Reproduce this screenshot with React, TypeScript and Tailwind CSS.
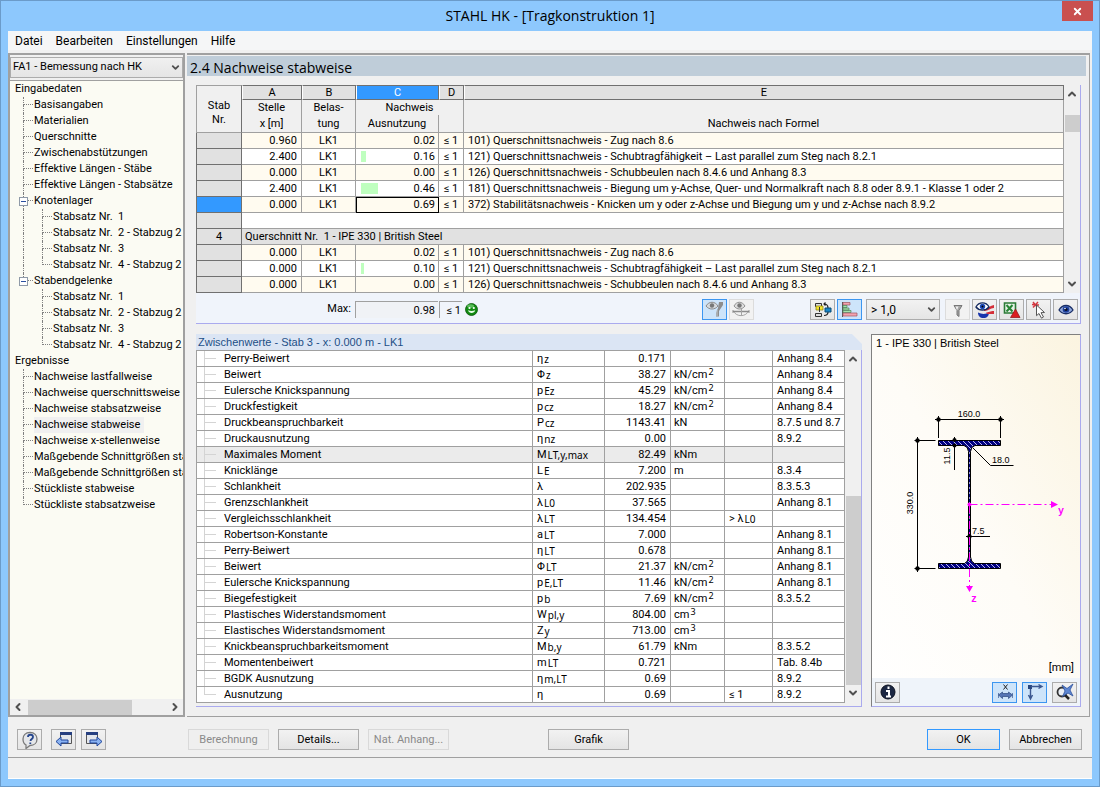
import type { ReactNode } from 'react'
import { ChevronDown, ChevronLeft, ChevronRight, ChevronUp, X } from 'lucide-react'
import clsx from 'clsx'

interface TreeItem {
  label: string
  children?: TreeItem[]
  active?: boolean
}

interface CheckRow {
  id?: string
  title?: string
  x?: string
  load?: string
  ratio?: string
  formula?: string
  bar?: number
  selected?: boolean
}

interface DetailRow {
  name: string
  sym: string
  sub?: string
  value: string
  unit?: string
  exp?: string
  cond?: ReactNode
  ref?: string
  active?: boolean
}

const STABSAETZE: TreeItem[] = [
  { label: 'Stabsatz Nr.  1' },
  { label: 'Stabsatz Nr.  2 - Stabzug 2' },
  { label: 'Stabsatz Nr.  3' },
  { label: 'Stabsatz Nr.  4 - Stabzug 2' },
]

const TREE: TreeItem[] = [
  {
    label: 'Eingabedaten',
    children: [
      { label: 'Basisangaben' },
      { label: 'Materialien' },
      { label: 'Querschnitte' },
      { label: 'Zwischenabstützungen' },
      { label: 'Effektive Längen - Stäbe' },
      { label: 'Effektive Längen - Stabsätze' },
      { label: 'Knotenlager', children: STABSAETZE },
      { label: 'Stabendgelenke', children: STABSAETZE },
    ],
  },
  {
    label: 'Ergebnisse',
    children: [
      { label: 'Nachweise lastfallweise' },
      { label: 'Nachweise querschnittsweise' },
      { label: 'Nachweise stabsatzweise' },
      { label: 'Nachweise stabweise', active: true },
      { label: 'Nachweise x-stellenweise' },
      { label: 'Maßgebende Schnittgrößen sta' },
      { label: 'Maßgebende Schnittgrößen sta' },
      { label: 'Stückliste stabweise' },
      { label: 'Stückliste stabsatzweise' },
    ],
  },
]

const CHECKS: CheckRow[] = [
  { x: '0.960', load: 'LK1', ratio: '0.02', formula: '101) Querschnittsnachweis - Zug nach 8.6' },
  { x: '2.400', load: 'LK1', ratio: '0.16', bar: 5, formula: '121) Querschnittsnachweis - Schubtragfähigkeit – Last parallel zum Steg nach 8.2.1' },
  { x: '0.000', load: 'LK1', ratio: '0.00', formula: '126) Querschnittsnachweis - Schubbeulen nach 8.4.6 und Anhang 8.3' },
  { x: '2.400', load: 'LK1', ratio: '0.46', bar: 17, formula: '181) Querschnittsnachweis - Biegung um y-Achse, Quer- und Normalkraft nach 8.8 oder 8.9.1 - Klasse 1 oder 2' },
  { x: '0.000', load: 'LK1', ratio: '0.69', selected: true, formula: '372) Stabilitätsnachweis - Knicken um y oder z-Achse und Biegung um y und z-Achse nach 8.9.2' },
  {},
  { id: '4', title: 'Querschnitt Nr.  1 - IPE 330 | British Steel' },
  { x: '0.000', load: 'LK1', ratio: '0.02', formula: '101) Querschnittsnachweis - Zug nach 8.6' },
  { x: '0.000', load: 'LK1', ratio: '0.10', bar: 3, formula: '121) Querschnittsnachweis - Schubtragfähigkeit – Last parallel zum Steg nach 8.2.1' },
  { x: '0.000', load: 'LK1', ratio: '0.00', formula: '126) Querschnittsnachweis - Schubbeulen nach 8.4.6 und Anhang 8.3' },
]

const DETAILS: DetailRow[] = [
  { name: 'Perry-Beiwert', sym: 'η', sub: 'z', value: '0.171', ref: 'Anhang 8.4' },
  { name: 'Beiwert', sym: 'Φ', sub: 'z', value: '38.27', unit: 'kN/cm', exp: '2', ref: 'Anhang 8.4' },
  { name: 'Eulersche Knickspannung', sym: 'p', sub: 'Ez', value: '45.29', unit: 'kN/cm', exp: '2', ref: 'Anhang 8.4' },
  { name: 'Druckfestigkeit', sym: 'p', sub: 'cz', value: '18.27', unit: 'kN/cm', exp: '2', ref: 'Anhang 8.4' },
  { name: 'Druckbeanspruchbarkeit', sym: 'P', sub: 'cz', value: '1143.41', unit: 'kN', ref: '8.7.5 und 8.7' },
  { name: 'Druckausnutzung', sym: 'η', sub: 'nz', value: '0.00', ref: '8.9.2' },
  { name: 'Maximales Moment', sym: 'M', sub: 'LT,y,max', value: '82.49', unit: 'kNm', active: true },
  { name: 'Knicklänge', sym: 'L', sub: 'E', value: '7.200', unit: 'm', ref: '8.3.4' },
  { name: 'Schlankheit', sym: 'λ', value: '202.935', ref: '8.3.5.3' },
  { name: 'Grenzschlankheit', sym: 'λ', sub: 'L0', value: '37.565', ref: 'Anhang 8.1' },
  { name: 'Vergleichsschlankheit', sym: 'λ', sub: 'LT', value: '134.454', cond: <>&gt; <Sym sym="λ" sub="L0" /></> },
  { name: 'Robertson-Konstante', sym: 'a', sub: 'LT', value: '7.000', ref: 'Anhang 8.1' },
  { name: 'Perry-Beiwert', sym: 'η', sub: 'LT', value: '0.678', ref: 'Anhang 8.1' },
  { name: 'Beiwert', sym: 'Φ', sub: 'LT', value: '21.37', unit: 'kN/cm', exp: '2', ref: 'Anhang 8.1' },
  { name: 'Eulersche Knickspannung', sym: 'p', sub: 'E,LT', value: '11.46', unit: 'kN/cm', exp: '2', ref: 'Anhang 8.1' },
  { name: 'Biegefestigkeit', sym: 'p', sub: 'b', value: '7.69', unit: 'kN/cm', exp: '2', ref: '8.3.5.2' },
  { name: 'Plastisches Widerstandsmoment', sym: 'W', sub: 'pl,y', value: '804.00', unit: 'cm', exp: '3' },
  { name: 'Elastisches Widerstandsmoment', sym: 'Z', sub: 'y', value: '713.00', unit: 'cm', exp: '3' },
  { name: 'Knickbeanspruchbarkeitsmoment', sym: 'M', sub: 'b,y', value: '61.79', unit: 'kNm', ref: '8.3.5.2' },
  { name: 'Momentenbeiwert', sym: 'm', sub: 'LT', value: '0.721', ref: 'Tab. 8.4b' },
  { name: 'BGDK Ausnutzung', sym: 'η', sub: 'm,LT', value: '0.69', ref: '8.9.2' },
  { name: 'Ausnutzung', sym: 'η', value: '0.69', cond: '≤ 1', ref: '8.9.2' },
]

function Sym({ sym, sub }: { sym: string; sub?: string }) {
  return (
    <>
      {sym}
      {sub && <sub className="bottom-[-1px] ml-px font-['Noto_Sans',sans-serif] text-[10px]">{sub}</sub>}
    </>
  )
}

function Icon({ children }: { children: ReactNode }) {
  return (
    <svg width="24" height="20" viewBox="0 0 24 20" fill="none" className="shrink-0" aria-hidden="true">
      {children}
    </svg>
  )
}

function IconButton({ label, active, disabled, children }: { label: string; active?: boolean; disabled?: boolean; children: ReactNode }) {
  return (
    <button
      type="button"
      aria-label={label}
      disabled={disabled}
      className={clsx(
        'flex h-[21px] w-[25px] shrink-0 items-center justify-center overflow-hidden border',
        active && 'border-[#3c96f0] bg-[#cde4fa]',
        disabled && 'border-[#dcdcdc] bg-[#f2f2f2]',
        !active && !disabled && 'border-[#acacac] bg-linear-to-b from-[#f2f2f2] to-[#e5e5e5]',
      )}
    >
      {children}
    </button>
  )
}

function TextButton({ children, disabled, primary, className }: { children: ReactNode; disabled?: boolean; primary?: boolean; className: string }) {
  return (
    <button
      type="button"
      disabled={disabled}
      className={clsx(
        'h-[21px] border pt-px text-[11px] leading-[18px]',
        disabled ? 'border-[#d9d9d9] bg-[#efefef] text-[#8a8a8a]' : 'bg-linear-to-b from-[#f2f2f2] to-[#e4e4e4]',
        !disabled && (primary ? 'border-[#3399ff]' : 'border-[#acacac]'),
        className,
      )}
    >
      {children}
    </button>
  )
}

function VScroll({ lead, thumb }: { lead: string; thumb: string }) {
  return (
    <div className="flex w-4 shrink-0 flex-col items-center bg-[#f0f0f0] text-[#505050]">
      <ChevronUp size={12} strokeWidth={4} className="mt-[3px]" />
      <div className={lead} />
      <div className={clsx('w-[15px] bg-[#cdcdcd]', thumb)} />
      <div className="grow" />
      <ChevronDown size={12} strokeWidth={4} className="mb-[3px]" />
    </div>
  )
}

// one connector cell in front of a tree label
function Guide({ branch, line }: { branch?: boolean; line?: boolean }) {
  return (
    <span className="h-4 w-[19px] shrink-0 pl-2">
      <span className={clsx('block h-2 w-[10px] border-dotted border-[#808080]', (branch || line) && 'border-l', branch && 'border-b')} />
      <span className={clsx('block h-2 border-dotted border-[#808080]', line && 'border-l')} />
    </span>
  )
}

function TreeNodes({ items, trail = [], level = 0 }: { items: TreeItem[]; trail?: boolean[]; level?: number }) {
  return (
    <ul>
      {items.map((item, i) => {
        const more = i < items.length - 1
        return (
          <li key={i}>
            <div className="relative flex h-4 whitespace-pre leading-4">
              {trail.map((line, k) => (
                <Guide key={k} line={line} />
              ))}
              {level > 0 && <Guide branch line={more} />}
              {level > 0 && item.children && (
                <button
                  type="button"
                  aria-label="Zuklappen"
                  className="absolute top-[4px] left-[4px] flex size-[9px] items-center justify-center border border-[#8f9aa8] bg-white"
                >
                  <span className="h-px w-[5px] bg-[#2b50a0]" />
                </button>
              )}
              <a href="#" className={item.active ? 'bg-[#f0f0f0] pr-1' : undefined}>{item.label}</a>
            </div>
            {item.children && (
              <TreeNodes items={item.children} level={level + 1} trail={level > 0 ? [...trail, more] : []} />
            )}
          </li>
        )
      })}
    </ul>
  )
}

function Sidebar() {
  return (
    <aside className="flex w-[177px] shrink-0 flex-col border-2 border-[#a0a0a0] bg-[#fbfbf3]">
      <div className="bg-[#f0f0f0] py-[2px]">
        <div className="relative">
          <select aria-label="Bemessungsfall" className="block h-[21px] w-full appearance-none border border-[#acacac] bg-linear-to-b from-[#f0f0f0] to-[#e5e5e5] pl-[2px] text-[11px]">
            <option>FA1 - Bemessung nach HK</option>
          </select>
          <ChevronDown size={11} strokeWidth={4} className="pointer-events-none absolute top-[5px] right-[2px] text-[#505050]" />
        </div>
      </div>
      <nav className="grow overflow-hidden border-t border-[#a0a0a0] pl-[5px] text-[11px]">
        <TreeNodes items={TREE} />
      </nav>
      <div className="flex h-4 items-center justify-between bg-[#f0f0f0] px-[2px] text-[#505050]">
        <ChevronLeft size={12} strokeWidth={4} />
        <div className="mr-[37px] ml-1 h-[15px] grow bg-[#cdcdcd]" />
        <ChevronRight size={12} strokeWidth={4} />
      </div>
    </aside>
  )
}

const cell = 'border-r border-b border-[#a0a0a0]'
const colHead = 'border border-t-[#707070] border-l-white border-r-[#707070] border-b-[#707070] bg-[#e1e1e1]'

function ChecksTable() {
  return (
    <table className="min-w-0 grow table-fixed border-separate border-spacing-0 text-[11px] leading-[15px] whitespace-pre">
      <colgroup>
        <col className="w-[46px]" />
        <col className="w-[60px]" />
        <col className="w-[54px]" />
        <col className="w-[83px]" />
        <col className="w-[25px]" />
        <col />
      </colgroup>
      <thead className="bg-[#f0f0f0]">
        <tr className="h-[15px] leading-[13px]">
          <th rowSpan={3} className="border border-[#a0a0a0] border-r-[#707070] pt-2 align-middle leading-[14px] font-normal">
            Stab<br />Nr.
          </th>
          <th className={clsx(colHead, 'font-normal')}>A</th>
          <th className={clsx(colHead, 'font-normal')}>B</th>
          <th className="border border-t-[#707070] border-r-[#707070] border-b-[#707070] border-l-white bg-[#3399ff] font-normal text-white">C</th>
          <th className={clsx(colHead, 'font-normal')}>D</th>
          <th className={clsx(colHead, 'font-normal')}>E</th>
        </tr>
        <tr className="h-[15px] align-top">
          <th className="border-r border-[#a0a0a0] font-normal">Stelle</th>
          <th className="border-r border-[#a0a0a0] font-normal">Belas-</th>
          <th colSpan={2} className="border-r border-[#a0a0a0] font-normal">Nachweis</th>
          <th className="border-r border-[#a0a0a0]" />
        </tr>
        <tr className="h-[18px] align-top">
          <th className={clsx(cell, 'pt-px font-normal')}>x [m]</th>
          <th className={clsx(cell, 'pt-px font-normal')}>tung</th>
          <th className={clsx(cell, 'pt-px font-normal')}>Ausnutzung</th>
          <th className={cell} />
          <th className={clsx(cell, 'pt-px font-normal')}>Nachweis nach Formel</th>
        </tr>
      </thead>
      <tbody>
        {CHECKS.map((row, i) => (
          <tr key={i} className={clsx('h-4', row.title ? 'bg-[#e1e1e1]' : row.formula && i % 2 === (i > 6 ? 1 : 0) ? 'bg-[#fffbf0]' : 'bg-white')}>
            <th
              className={clsx(
                'border-r border-b border-l border-r-[#707070] border-b-[#707070] border-l-[#707070] font-normal',
                row.selected ? 'bg-[#3399ff]' : 'bg-[#e1e1e1]',
              )}
            >
              {row.id}
            </th>
            {row.formula ? (
              <>
                <td className={clsx(cell, 'pr-1 text-right')}>{row.x}</td>
                <td className={clsx(cell, 'text-center')}>{row.load}</td>
                <td className={clsx(cell, row.selected && 'outline-1 -outline-offset-1 outline-black')}>
                  <div className="flex items-center justify-between pr-[3px] pl-[5px]">
                    <span className="h-[11px] bg-[#bfffbf]" style={{ width: row.bar ?? 0 }} />
                    {row.ratio}
                  </div>
                </td>
                <td className={clsx(cell, 'text-center')}>≤ 1</td>
                <td className={clsx(cell, 'overflow-hidden pl-1')}>{row.formula}</td>
              </>
            ) : (
              <td colSpan={5} className={clsx(cell, 'pl-[3px]')}>{row.title}</td>
            )}
          </tr>
        ))}
      </tbody>
    </table>
  )
}

function MaxBar() {
  return (
    <div className="flex h-[30px] items-center pt-[3px] pr-[2px]">
      <label htmlFor="max" className="w-[155px] text-right text-[11px]">Max:</label>
      <input
        id="max"
        readOnly
        value="0.98"
        className="ml-1 h-[17px] w-[83px] border-t border-l border-[#a0a0a0] bg-[#f0f2f6] pr-[3px] text-right text-[11px]"
      />
      <span className="ml-px h-[17px] w-[23px] border-t border-l border-[#a0a0a0] pr-px text-right text-[11px] leading-[17px]">≤ 1</span>
      <svg width="13" height="13" viewBox="0 0 13 13" className="ml-[3px]" aria-hidden="true">
        <circle cx="6.500" cy="6.500" r="6" fill="#128a12" stroke="#075507" strokeWidth=".8" />
        <ellipse cx="5.500" cy="3" rx="3.500" ry="1.800" fill="#8be08b" opacity=".6" />
        <circle cx="4.500" cy="5" r="1.100" fill="#fff" />
        <circle cx="8.800" cy="5" r="1.100" fill="#fff" />
        <path d="M3 7.300q3.500 1.500 7.200 0c-.8 3.400-6.200 3.600-7.200 0z" fill="#e9ffe9" />
      </svg>
      <div className="ml-auto flex items-center gap-[2px]">
        <IconButton label="Nachweis anzeigen" active>
          <Icon>
            <path d="M3 6c3-5 9-5 12 0-3 4-9 4-12 0z" fill="#d6dade" stroke="#8a8a8a" />
            <circle cx="9" cy="5.500" r="2.200" fill="#777" />
            <path d="M20 2v3l-4 6v5.500h-3V13l2-5 1-6z" fill="#8d8d8d" />
            <path d="M14 10v6" stroke="#c5cdd4" />
          </Icon>
        </IconButton>
        <IconButton label="Verlauf anzeigen" disabled>
          <Icon>
            <path d="M4 6c2.500-5 8-5 11 0-3 4-8 4-11 0z" fill="#dedede" stroke="#909090" />
            <circle cx="9.500" cy="5.500" r="2.200" fill="#777" />
            <path d="M3 11.500h16" stroke="#8c8c8c" strokeWidth="1.500" />
            <path d="M4 11.500c2 5.500 12 5.500 14 0M11.500 8.500v7" stroke="#a5a5a5" />
            <path d="m2.500 10 2.500 1.500L2.500 13zM19.500 10 17 11.500l2.500 1.500z" fill="#888" />
          </Icon>
        </IconButton>
        <div className="w-[52px]" />
        <IconButton label="Bezug wechseln">
          <Icon>
            <path d="M4.500 3.500h6v3h-6zM4.500 13.500h6v3h-6z" fill="#ddd" stroke="#333" />
            <path d="M5 6h7v4H5z" fill="#f4e532" stroke="#877b00" strokeWidth=".7" />
            <path d="M8.500 7v5" stroke="#333" />
            <path d="M13 4c3 0 4 2 4 4M17 12c0 2-1 3.500-4 3.500M14.500 2.500 13 4l1.500 1.500" stroke="#222" strokeWidth="1.200" />
            <path d="M14 8h6v4h-6z" fill="#1686c9" stroke="#084a75" />
          </Icon>
        </IconButton>
        <IconButton label="Relationsbalken" active>
          <Icon>
            <path d="M4.500 2v15" stroke="#555" />
            <path d="M5 2.500h7v2.500H5z" fill="#f3a3ae" stroke="#9b5560" strokeWidth=".7" />
            <path d="M5 5.500h4v2H5zM5 8h6v2H5zM5 10.500h8v2H5z" fill="#a5e2ac" stroke="#4f8358" strokeWidth=".7" />
            <path d="M5 13h14v3H5z" fill="#f3a3ae" stroke="#9b5560" strokeWidth=".7" />
          </Icon>
        </IconButton>
        <div className="relative ml-[2px]">
          <select aria-label="Filter" className="block h-[21px] w-[74px] appearance-none border border-[#acacac] bg-linear-to-b from-[#f2f2f2] to-[#e5e5e5] pl-1 text-[12px]">
            <option>&gt; 1,0</option>
          </select>
          <ChevronDown size={11} strokeWidth={4} className="pointer-events-none absolute top-[5px] right-[3px] text-[#505050]" />
        </div>
        <div className="w-px" />
        <IconButton label="Filtern" disabled>
          <Icon>
            <path d="M8 5.500h8l-3 5v6l-2-1.500v-4.500z" fill="#a5a5a5" stroke="#777" />
            <path d="M9.500 6.500h3l-1.500 4z" fill="#ededed" />
          </Icon>
        </IconButton>
        <IconButton label="Farbskala">
          <Icon>
            <path d="M5 12.500c4 2 8 2 11-.5 0 4-2 6-5.500 6S5 16 5 12.500z" fill="#1735ad" />
            <path d="M11 9c4 0 5-3 10-4v3c-4 0-5 3-10 3zM13 12.500c3 0 4-1.500 8-1.500v3h-7z" fill="#d42f39" />
            <path d="M3 7c3-5.500 10-5.500 13 0-3 4-10 4-13 0z" fill="#fff" stroke="#142a60" strokeWidth="1.400" />
            <circle cx="9.500" cy="6.500" r="2.700" fill="#1b49b7" />
            <circle cx="9.500" cy="6.500" r="1" fill="#000" />
          </Icon>
        </IconButton>
        <IconButton label="Export nach Excel">
          <Icon>
            <path d="M4.500 3h11v10h-11z" fill="#e8f3e8" stroke="#2b7b36" strokeWidth="1.600" />
            <path d="m6.500 5 6 6.500M12.500 5l-6 6.500" stroke="#278535" strokeWidth="2" />
            <path d="m15.500 9 4.500 8.500H10.500z" fill="#da1f20" stroke="#8d1013" strokeWidth=".7" />
          </Icon>
        </IconButton>
        <IconButton label="Auswahl in Grafik">
          <Icon>
            <path d="m6 2 5 6M11 2 6 7.500M5 4.500l7 .5" stroke="#d53840" strokeWidth="1.400" />
            <path d="m9.500 5 8 7.500-3.500.2 2.500 4.300-2 1.200-2.500-4.700-2.500 2.200z" fill="#fff" stroke="#555" />
          </Icon>
        </IconButton>
        <IconButton label="Sichtbarkeit">
          <Icon>
            <path d="M5 10c3.500-6 10.500-6 14 0-3.500 5-10.500 5-14 0z" fill="#91a9dc" stroke="#182d66" strokeWidth="1.300" />
            <circle cx="12" cy="9.500" r="3.300" fill="#1d3f9b" />
            <circle cx="12" cy="9.500" r="1.600" fill="#07102c" />
            <circle cx="11" cy="8.500" r=".8" fill="#fff" />
          </Icon>
        </IconButton>
      </div>
    </div>
  )
}

function DetailsPanel() {
  return (
    <section className="flex min-w-0 grow flex-col">
      <h2 className="h-4 bg-[#dbe5f4] pl-[2px] font-['Liberation_Sans',Arial,sans-serif] text-[11px] leading-4 text-[#1d4f86] [clip-path:polygon(0_0,calc(100%-10px)_0,100%_10px,100%_100%,0_100%)]">
        Zwischenwerte - Stab 3 - x: 0.000 m - LK1
      </h2>
      <div className="flex grow items-start border-r border-b border-[#aaaaee]">
        <table className="min-w-0 grow table-fixed border-separate border-spacing-0 border-t border-l border-[#a0a0a0] bg-white text-[11px] leading-[15px] whitespace-nowrap">
          <colgroup>
            <col />
            <col className="w-[72px]" />
            <col className="w-[66px]" />
            <col className="w-[54px]" />
            <col className="w-[48px]" />
            <col className="w-[72px]" />
          </colgroup>
          <tbody>
            {DETAILS.map((row, i) => (
              <tr key={i} className={clsx('h-4', row.active && 'bg-[#ebebeb]')}>
                <td className={cell}>
                  <div className="flex h-[15px] pl-[7px]">
                    <span className={clsx('w-px bg-[#d4d4d4]', i === DETAILS.length - 1 && 'h-2')} />
                    <span className="mt-[7px] mr-[8px] h-px w-[11px] bg-[#d4d4d4]" />
                    {row.name}
                  </div>
                </td>
                <td className={clsx(cell, 'pl-1')}><Sym sym={row.sym} sub={row.sub} /></td>
                <td className={clsx(cell, 'pr-1 text-right')}>{row.value}</td>
                <td className={clsx(cell, 'pl-[3px]')}>
                  {row.unit}
                  {row.exp && <sup className="top-[-3px] ml-px font-['Noto_Sans',sans-serif] text-[9px]">{row.exp}</sup>}
                </td>
                <td className={clsx(cell, 'pl-1')}>{row.cond}</td>
                <td className={clsx(cell, 'overflow-hidden pl-1')}>{row.ref}</td>
              </tr>
            ))}
          </tbody>
        </table>
        <div className="flex self-stretch pb-1">
          <VScroll lead="h-[131px]" thumb="h-[189px]" />
        </div>
      </div>
    </section>
  )
}

function SectionDrawing() {
  return (
    <svg
      width="207"
      height="326"
      viewBox="0 0 207 326"
      fill="none"
      fontFamily="Liberation Sans, Arial, sans-serif"
      fontSize="9"
      role="img"
      aria-label="Querschnitt IPE 330"
    >
      <defs>
        <pattern id="hatch" width="5" height="5" patternUnits="userSpaceOnUse">
          <path d="M0 0h5v5H0z" fill="#000080" />
          <path d="m0 0 5 5" stroke="#b9b9ee" />
        </pattern>
      </defs>
      <g stroke="#000">
        <path d="M63 84.500h69M66.500 81v22M128.500 81v22M42.500 105.500h21M42.500 233.500h21M45.500 102v135M82.500 102v33M101 113l17.500 17.500h23M94 201.500h24" />
        <path d="M66.500 105.500h62v5H103q-4 1-4.500 6V222q.5 5 4 6.500h26v5h-62v-5h26q3.500-1.500 4-6.500V116.500q-.5-5-4.500-6H66.500z" fill="url(#hatch)" />
        <path d="M97.500 117v106" stroke="#9999d0" strokeDasharray="2 3" />
      </g>
      <g fill="#000">
        <circle cx="66.500" cy="84.500" r="2.200" />
        <circle cx="128.500" cy="84.500" r="2.200" />
        <circle cx="45.500" cy="105.500" r="2.200" />
        <circle cx="45.500" cy="233.500" r="2.200" />
        <circle cx="82.500" cy="105" r="2" />
        <circle cx="82.500" cy="110.500" r="2" />
        <circle cx="97.500" cy="201.500" r="2.200" />
        <text x="97" y="82" textAnchor="middle">160.0</text>
        <text x="120" y="128">18.0</text>
        <text x="100" y="199">7.5</text>
        <text transform="translate(41 168) rotate(-90)" textAnchor="middle">330.0</text>
        <text transform="translate(78 121) rotate(-90)" textAnchor="middle">11.5</text>
      </g>
      <g stroke="#f0f">
        <path d="M97.500 169.500h82" strokeDasharray="8 3 2 3" />
        <path d="M97.500 170v82" strokeDasharray="8 3 2 3" />
      </g>
      <g fill="#f0f">
        <circle cx="97.500" cy="169.500" r="2" />
        <path d="m179 166 7 3.500-7 3.500zM94 251h7l-3.500 6z" />
        <g fontFamily="Liberation Mono, monospace" fontSize="10" fontWeight="bold">
          <text x="186" y="179">y</text>
          <text x="99" y="267">z</text>
        </g>
      </g>
    </svg>
  )
}

function SectionPanel() {
  return (
    <section className="flex w-[210px] shrink-0 flex-col border border-t-[#808080] border-r-[#aaaaee] border-b-[#aaaaee] border-l-[#808080] bg-linear-to-tr from-white via-[#fefcf7] to-[#fbf4e0]">
      <h2 className="h-4 pl-1 font-['Liberation_Sans',Arial,sans-serif] text-[11px] leading-4">1 - IPE 330 | British Steel</h2>
      <div className="-mt-4 h-[320px] overflow-hidden">
        <SectionDrawing />
      </div>
      <p className="mt-auto pr-[6px] pb-[2px] text-right text-[11px] leading-4">[mm]</p>
      <div className="flex h-7 items-center bg-[#eff4fa] px-[3px]">
        <IconButton label="Info">
          <Icon>
            <circle cx="12" cy="10" r="7" fill="#1c2742" stroke="#0b101f" />
            <path d="M12.500 4.500v2.500M10 9h3v5.500M10 14.500h5" stroke="#fff" strokeWidth="2" />
          </Icon>
        </IconButton>
        <div className="ml-auto flex gap-[5px]">
          <IconButton label="Bemaßung" active>
            <Icon>
              <path d="m10.500 2.500 4 5M14.500 2.500l-4 5" stroke="#222" />
              <path d="M5.500 11v5M19.500 11v5" stroke="#3a5790" strokeWidth=".7" />
              <path d="m5.500 13 4-3v1.500h6V10l4 3-4 3.500v-2h-6v2z" fill="#5474b4" stroke="#29477f" strokeWidth=".7" />
            </Icon>
          </IconButton>
          <IconButton label="Achsen" active>
            <Icon>
              <path d="M5 3h4v4H5z" fill="#29477f" />
              <path d="M8 4.500h11M7.500 7v10M15.500 2.500 19 4.500l-3.500 2M5.500 13l2 4 2-4" stroke="#3b5790" strokeWidth="1.400" />
            </Icon>
          </IconButton>
          <IconButton label="Zoom zurücksetzen">
            <Icon>
              <circle cx="9" cy="10" r="4.500" fill="#e9eef5" stroke="#333" strokeWidth="1.800" />
              <path d="m12 13 4 4" stroke="#222" strokeWidth="2.500" />
              <path d="m9 3 5 3.500 6-4.500-3 6 3 6-5-3-5.500 3.500L12 9z" fill="#5d86d2" stroke="#2c519c" strokeWidth=".8" />
            </Icon>
          </IconButton>
        </div>
      </div>
    </section>
  )
}

function Footer() {
  return (
    <footer className="flex h-10 items-start pt-3 pr-[10px] pl-[9px]">
      <div className="flex">
        <IconButton label="Hilfe">
          <Icon>
            <path d="M12 2.500c4.500 0 7 3 7 6.500s-2.500 6.500-7 6.500l-4 3v-3.500c-2-1-3-3.500-3-6 0-3.500 2.500-6.500 7-6.500z" fill="#e5e7ea" stroke="#7b7b7b" strokeWidth="1.300" />
            <path d="M10 7c0-3 5-3 5 0 0 2-2.500 2-2.500 4M12.300 12.500v1.500" stroke="#26468d" strokeWidth="1.800" />
          </Icon>
        </IconButton>
        <div className="ml-[9px] flex gap-[5px]">
          <IconButton label="Vorherige Maske">
            <Icon>
              <path d="M8.500 2.500h11v11h-11z" fill="#e3e6ec" stroke="#555" />
              <path d="M8 2h12v3H8z" fill="#263f80" />
              <path d="m4 11.500 5-4.500v3h7v3H9v3z" fill="#8ab3f2" stroke="#1f459c" />
            </Icon>
          </IconButton>
          <IconButton label="Nächste Maske">
            <Icon>
              <path d="M4.500 2.500h11v11h-11z" fill="#e3e6ec" stroke="#555" />
              <path d="M4 2h12v3H4z" fill="#263f80" />
              <path d="m20 11.500-5-4.500v3H8v3h7v3z" fill="#8ab3f2" stroke="#1f459c" />
            </Icon>
          </IconButton>
        </div>
      </div>
      <div className="ml-[82px] flex gap-[9px]">
        <TextButton disabled className="w-[81px]">Berechnung</TextButton>
        <TextButton className="w-[81px]">Details...</TextButton>
        <TextButton disabled className="w-[81px]">Nat. Anhang...</TextButton>
      </div>
      <TextButton className="ml-[99px] w-[81px]">Grafik</TextButton>
      <div className="ml-auto flex gap-[9px]">
        <TextButton primary className="w-[73px]">OK</TextButton>
        <TextButton className="w-[73px]">Abbrechen</TextButton>
      </div>
    </footer>
  )
}

export default function App() {
  return (
    <div className="flex min-h-screen flex-col border border-[#6b9bc9] bg-[#8dc8fd] px-[7px] pb-[7px] font-['Roboto',sans-serif] text-black">
      <header className="flex h-[30px] items-center">
        <h1 className="ml-[30px] grow text-center font-['Open_Sans',sans-serif] text-[14px] leading-5">STAHL HK - [Tragkonstruktion 1]</h1>
        <button type="button" aria-label="Schließen" className="-mr-px flex h-5 w-[31px] items-center justify-center self-start bg-[#c9504f] text-white">
          <X size={11} strokeWidth={4} />
        </button>
      </header>
      <div className="flex grow flex-col bg-[#f0f0f0]">
        <nav className="flex h-[19px] items-center gap-[13px] bg-[#f5f6f7] pl-[7px] text-[12px]">
          <button type="button">Datei</button>
          <button type="button">Bearbeiten</button>
          <button type="button">Einstellungen</button>
          <button type="button">Hilfe</button>
        </nav>
        <div className="mt-[3px] flex grow">
          <Sidebar />
          <main className="mr-[2px] ml-[2px] flex min-w-0 grow flex-col border-t-2 border-r border-b border-[#a0a0a0] pr-2 pb-[9px]">
            <h2 className="mt-px -mr-[5px] h-5 bg-[#bfcdd9] pl-[3px] font-['Open_Sans',sans-serif] text-[14px] leading-6">2.4 Nachweise stabweise</h2>
            <section className="mt-[9px] ml-[9px] border-r border-b border-[#aaaaee] bg-[#f0f4fb]">
              <div className="flex">
                <ChecksTable />
                <VScroll lead="h-[15px]" thumb="h-[17px]" />
              </div>
              <MaxBar />
            </section>
            <div className="mt-[10px] ml-[9px] flex grow gap-[9px]">
              <DetailsPanel />
              <SectionPanel />
            </div>
          </main>
        </div>
        <Footer />
        <div className="h-[22px] border-t border-b border-t-[#a0a0a0] border-b-white" />
      </div>
    </div>
  )
}
